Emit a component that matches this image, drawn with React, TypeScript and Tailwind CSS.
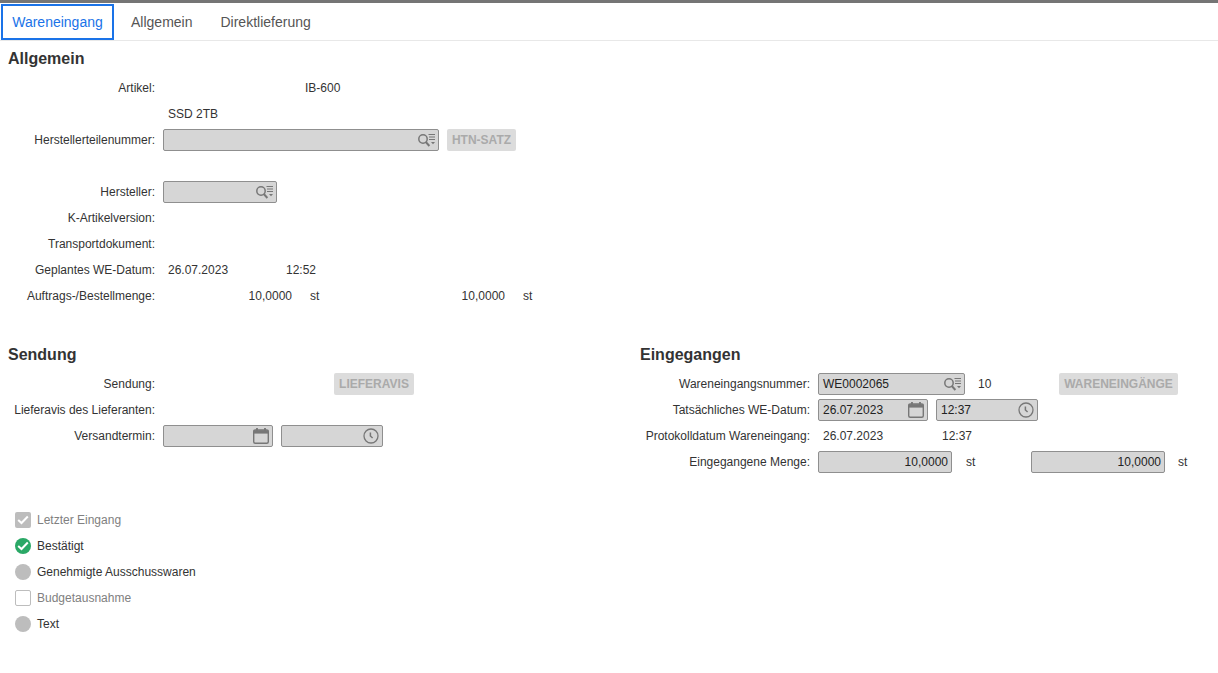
import type { ReactNode } from "react";

const LookupIcon = () => (
  <svg width="20" height="16" viewBox="0 0 20 16" fill="none" stroke="#777" className="-mr-[2px] shrink-0">
    <circle cx="6" cy="7" r="4.2" strokeWidth="1.5" />
    <path d="M8.8 10 L12.4 14" strokeWidth="1.9" />
    <path d="M11.5 2.5 H18 M12 5 H18 M12 7.5 H18" strokeWidth="1.2" />
    <path d="M14 10 H18 L16 12.2 Z" fill="#777" stroke="none" />
  </svg>
);

const CalendarIcon = () => (
  <svg width="18" height="18" viewBox="0 0 18 18" fill="none" className="-mr-[1px] shrink-0">
    <rect x="1.7" y="3" width="14.6" height="13.3" rx="1.5" stroke="#777" strokeWidth="1.4" />
    <path d="M1.5 3.2 H16.5 V6.6 H1.5 Z" fill="#777" />
    <path d="M5 1 V4 M13 1 V4" stroke="#777" strokeWidth="1.8" />
  </svg>
);

const ClockIcon = () => (
  <svg width="16" height="16" viewBox="0 0 16 16" fill="none" stroke="#777" className="shrink-0">
    <circle cx="8" cy="8" r="7" strokeWidth="1.3" />
    <path d="M7.4 4.5 V8 L9.6 10" strokeWidth="1.5" />
  </svg>
);

const CheckMark = () => (
  <svg width="12" height="10" viewBox="0 0 12 10" fill="none" stroke="#fff" strokeWidth="2">
    <path d="M1.2 5 L4.5 8 L10.8 1.5" />
  </svg>
);

function Row({ label, width, children }: { label?: string; width: string; children?: ReactNode }) {
  return (
    <div className="flex h-[26px] items-center">
      <div className={`${width} shrink-0 text-right text-[#333]`}>{label}</div>
      <div className="ml-2 flex items-center">{children}</div>
    </div>
  );
}

function Field({ width, icon, value, right }: { width: string; icon?: ReactNode; value?: string; right?: boolean }) {
  return (
    <div
      className={`${width} flex h-[22px] shrink-0 items-center rounded-[2px] border border-[#8f8f8f] bg-[#d6d6d6] pl-1 pr-[3px] text-[#222] ${
        right ? "justify-end" : "justify-between"
      }`}
    >
      <span>{value}</span>
      {icon}
    </div>
  );
}

function ActionButton({ width, children }: { width: string; children: ReactNode }) {
  return (
    <div
      className={`${width} flex h-[22px] shrink-0 items-center justify-center rounded-[2px] bg-[#dcdcdc] font-bold text-[#aaaaaa]`}
    >
      {children}
    </div>
  );
}

export default function App() {
  return (
    <div className="h-[673px] w-[1218px] overflow-hidden bg-white text-[12px] font-['Liberation_Sans',Arial,sans-serif] text-[#333] antialiased">
      <div className="h-[3px] bg-[#757575]" />

      {/* Tabs */}
      <div className="flex h-[38px] items-stretch border-b border-[#e8e8e8] pt-px pl-px text-[14px] text-[#555]">
        <div className="flex h-[36px] w-[113px] items-center justify-center border-2 border-[#1a73e8] text-[#1a73e8]">
          Wareneingang
        </div>
        <div className="ml-[17px] flex items-center">Allgemein</div>
        <div className="ml-[28px] flex items-center">Direktlieferung</div>
      </div>

      {/* Allgemein */}
      <h2 className="mt-[9px] h-[20px] pl-2 text-[16px] leading-[18px] font-bold text-[#333]">Allgemein</h2>
      <div className="mt-[5px]">
        <Row label="Artikel:" width="w-[155px]">
          <span className="ml-[142px]">IB-600</span>
        </Row>
        <Row width="w-[155px]">
          <span className="ml-[5px]">SSD 2TB</span>
        </Row>
        <Row label="Herstellerteilenummer:" width="w-[155px]">
          <Field width="w-[276px]" icon={<LookupIcon />} />
          <div className="ml-2">
            <ActionButton width="w-[69px]">HTN-SATZ</ActionButton>
          </div>
        </Row>
        <Row width="w-[155px]" />
        <Row label="Hersteller:" width="w-[155px]">
          <Field width="w-[114px]" icon={<LookupIcon />} />
        </Row>
        <Row label="K-Artikelversion:" width="w-[155px]" />
        <Row label="Transportdokument:" width="w-[155px]" />
        <Row label="Geplantes WE-Datum:" width="w-[155px]">
          <span className="ml-[5px] w-[118px]">26.07.2023</span>
          <span>12:52</span>
        </Row>
        <Row label="Auftrags-/Bestellmenge:" width="w-[155px]">
          <span className="w-[129px] text-right">10,0000</span>
          <span className="ml-[18px] w-[148px]">st</span>
          <span className="w-[47px] text-right">10,0000</span>
          <span className="ml-[18px]">st</span>
        </Row>
      </div>

      {/* Sendung / Eingegangen */}
      <div className="mt-[37px] flex">
        <div className="w-[640px] shrink-0">
          <h2 className="h-[20px] pl-2 text-[16px] leading-[18px] font-bold text-[#333]">Sendung</h2>
          <div className="mt-[5px]">
            <Row label="Sendung:" width="w-[155px]">
              <div className="ml-[171px]">
                <ActionButton width="w-[80px]">LIEFERAVIS</ActionButton>
              </div>
            </Row>
            <Row label="Lieferavis des Lieferanten:" width="w-[155px]" />
            <Row label="Versandtermin:" width="w-[155px]">
              <Field width="w-[110px]" icon={<CalendarIcon />} />
              <div className="ml-2">
                <Field width="w-[102px]" icon={<ClockIcon />} />
              </div>
            </Row>
          </div>
        </div>
        <div className="flex-1">
          <h2 className="h-[20px] text-[16px] leading-[18px] font-bold text-[#333]">Eingegangen</h2>
          <div className="mt-[5px]">
            <Row label="Wareneingangsnummer:" width="w-[170px]">
              <Field width="w-[147px]" value="WE0002065" icon={<LookupIcon />} />
              <span className="ml-[13px] w-[81px]">10</span>
              <ActionButton width="w-[119px]">WARENEINGÄNGE</ActionButton>
            </Row>
            <Row label="Tatsächliches WE-Datum:" width="w-[170px]">
              <Field width="w-[110px]" value="26.07.2023" icon={<CalendarIcon />} />
              <div className="ml-2">
                <Field width="w-[102px]" value="12:37" icon={<ClockIcon />} />
              </div>
            </Row>
            <Row label="Protokolldatum Wareneingang:" width="w-[170px]">
              <span className="ml-[5px] w-[119px]">26.07.2023</span>
              <span>12:37</span>
            </Row>
            <Row label="Eingegangene Menge:" width="w-[170px]">
              <Field width="w-[134px]" value="10,0000" right />
              <span className="ml-[14px] w-[65px]">st</span>
              <Field width="w-[134px]" value="10,0000" right />
              <span className="ml-[13px]">st</span>
            </Row>
          </div>
        </div>
      </div>

      {/* Status list */}
      <div className="mt-[32px] pl-[15px]">
        <div className="flex h-[26px] items-center gap-[6px] text-[#808080]">
          <span className="flex h-4 w-4 items-center justify-center rounded-[2px] bg-[#bdbdbd]">
            <CheckMark />
          </span>
          Letzter Eingang
        </div>
        <div className="flex h-[26px] items-center gap-[6px]">
          <span className="flex h-4 w-4 items-center justify-center rounded-full bg-[#2aa866]">
            <CheckMark />
          </span>
          Bestätigt
        </div>
        <div className="flex h-[26px] items-center gap-[6px]">
          <span className="h-4 w-4 rounded-full bg-[#bdbdbd]" />
          Genehmigte Ausschusswaren
        </div>
        <div className="flex h-[26px] items-center gap-[6px] text-[#808080]">
          <span className="h-4 w-4 rounded-[2px] border border-[#bdbdbd] bg-white" />
          Budgetausnahme
        </div>
        <div className="flex h-[26px] items-center gap-[6px]">
          <span className="h-4 w-4 rounded-full bg-[#bdbdbd]" />
          Text
        </div>
      </div>
    </div>
  );
}
